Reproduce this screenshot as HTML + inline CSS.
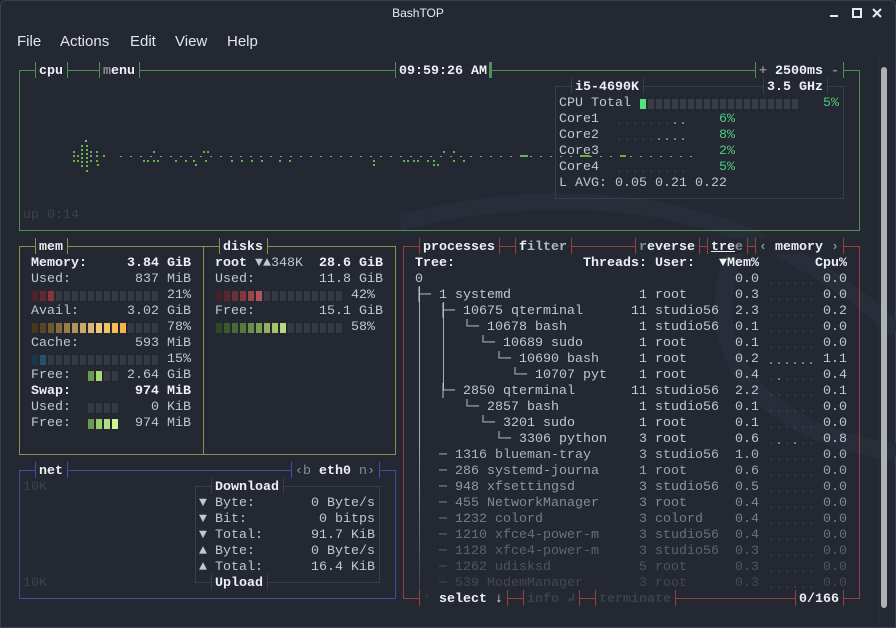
<!DOCTYPE html>
<html><head><meta charset="utf-8"><style>
*{margin:0;padding:0;box-sizing:border-box}
html,body{width:896px;height:628px;overflow:hidden;background:#232833}
body{position:relative;font-family:"Liberation Mono",monospace;font-size:13.33px;color:#c3c8cd}
.win{position:absolute;left:0;top:0;width:896px;height:628px;border:1px solid #3a404b;border-radius:6px 6px 0 0}
.t{position:absolute;white-space:pre;line-height:16px;height:16px;padding-top:2px}
.b{font-weight:bold;color:#eef0f2}
.d{color:#3c424b}
.g{color:#888d94}
.gr{color:#50c878}
.h{position:absolute;height:1px}
.v{position:absolute;width:1px}
.lbl{position:absolute;height:16px;background:#232833;border-left:1px solid;border-right:1px solid;padding-left:3px;padding-top:2px;white-space:pre;line-height:16px}
.c{position:absolute;width:6px;height:10px}
.ra{text-align:right}
.menu{position:absolute;top:33px;font-family:"Liberation Sans",sans-serif;font-size:15px;color:#e2e6ea}
</style></head><body>
<div class="win"></div>
<svg style="position:absolute;left:0;top:0" width="896" height="628">
<path d="M400 222 Q 700 150 896 330" stroke="#282e39" stroke-width="16" fill="none"/>
<path d="M745 232 C 690 330 740 430 896 452" stroke="#282e39" stroke-width="18" fill="none"/>
<defs><pattern id="p" width="10" height="3" patternUnits="userSpaceOnUse"><rect x="0" y="0" width="2" height="2" fill="#6cb04c"/></pattern></defs>
<rect x="113" y="155" width="580" height="2" fill="url(#p)"/>
<g fill="#6cb04c">
<rect x="73" y="151" width="2" height="2"/><rect x="73" y="155" width="2" height="2"/><rect x="73" y="160" width="2" height="2"/>
<rect x="77" y="155" width="2" height="2"/><rect x="77" y="160" width="2" height="2"/>
<rect x="81" y="145" width="2" height="2"/><rect x="81" y="149" width="2" height="2"/><rect x="81" y="153" width="2" height="2"/><rect x="81" y="157" width="2" height="2"/><rect x="81" y="161" width="2" height="2"/><rect x="81" y="165" width="2" height="2"/>
<rect x="85" y="140" width="2" height="2" fill="#a8b060"/><rect x="86" y="145" width="2" height="2"/><rect x="86" y="149" width="2" height="2"/><rect x="86" y="153" width="2" height="2"/><rect x="86" y="157" width="2" height="2"/><rect x="86" y="161" width="2" height="2"/><rect x="86" y="165" width="2" height="2"/><rect x="86" y="170" width="2" height="2"/>
<rect x="90" y="151" width="2" height="2"/><rect x="90" y="155" width="2" height="2"/><rect x="90" y="160" width="2" height="2"/>
<rect x="96" y="151" width="2" height="2"/><rect x="96" y="155" width="2" height="2"/><rect x="96" y="160" width="2" height="2"/><rect x="97" y="164" width="2" height="2"/>
<rect x="103" y="155" width="2" height="2"/>
<rect x="143" y="160" width="2" height="2"/><rect x="147" y="160" width="2" height="2"/>
<rect x="153" y="151" width="2" height="2"/><rect x="153" y="160" width="2" height="2"/><rect x="157" y="160" width="2" height="2"/>
<rect x="175" y="160" width="2" height="2"/><rect x="185" y="160" width="2" height="2"/><rect x="193" y="160" width="2" height="2"/><rect x="195" y="164" width="2" height="2"/>
<rect x="203" y="151" width="2" height="2"/><rect x="207" y="151" width="2" height="2"/><rect x="205" y="160" width="2" height="2"/>
<rect x="231" y="160" width="2" height="2"/><rect x="241" y="160" width="2" height="2"/><rect x="251" y="160" width="2" height="2"/><rect x="261" y="160" width="2" height="2"/>
<rect x="279" y="160" width="2" height="2"/><rect x="289" y="160" width="2" height="2"/><rect x="373" y="160" width="2" height="2"/><rect x="373" y="164" width="2" height="2"/>
<rect x="403" y="160" width="2" height="2"/><rect x="407" y="160" width="2" height="2"/><rect x="413" y="160" width="2" height="2"/><rect x="417" y="160" width="2" height="2"/><rect x="427" y="160" width="2" height="2"/>
<rect x="433" y="160" width="2" height="2"/><rect x="433" y="164" width="2" height="2"/><rect x="437" y="164" width="2" height="2"/>
<rect x="443" y="151" width="2" height="2"/><rect x="453" y="151" width="2" height="2"/><rect x="453" y="160" width="2" height="2"/><rect x="463" y="160" width="2" height="2"/>
<rect x="520" y="155" width="8" height="2"/><rect x="580" y="155" width="10" height="2"/><rect x="620" y="155" width="6" height="2"/>
</g>
</svg>

<!-- title bar -->
<div style="position:absolute;left:0;top:6px;width:836px;text-align:center;font-family:'Liberation Sans',sans-serif;font-size:12px;color:#e8ebee">BashTOP</div>
<svg style="position:absolute;left:826px;top:7px" width="62" height="14">
<rect x="4" y="8" width="8" height="2" fill="#e8ebee"/>
<rect x="27" y="2" width="8" height="8" fill="none" stroke="#e8ebee" stroke-width="2"/>
<path d="M47 2 L55 10 M55 2 L47 10" stroke="#e8ebee" stroke-width="2"/>
</svg>
<div class="menu" style="left:17px">File</div>
<div class="menu" style="left:60px">Actions</div>
<div class="menu" style="left:130px">Edit</div>
<div class="menu" style="left:175px">View</div>
<div class="menu" style="left:227px">Help</div>

<!-- scrollbar -->
<div class="v" style="left:878px;top:56px;height:570px;background:#2c323c"></div>
<div style="position:absolute;left:881px;top:67px;width:6px;height:541px;border-radius:3px;background:#aeb2b7"></div>

<!-- CPU box -->
<div class="h" style="left:19px;top:70px;width:841px;background:#4f8f55"></div>
<div class="h" style="left:19px;top:230px;width:841px;background:#4f8f55"></div>
<div class="v" style="left:19px;top:70px;height:161px;background:#4f8f55"></div>
<div class="v" style="left:859px;top:70px;height:161px;background:#4f8f55"></div>
<div class="lbl b" style="left:35px;top:62px;width:33px;border-color:#4f8f55">cpu</div>
<div class="lbl b" style="left:99px;top:62px;width:41px;border-color:#4f8f55"><span style="color:#8a8f95">m</span>enu</div>
<div class="lbl b" style="left:395px;top:62px;width:97px;border-color:#4f8f55;border-right:3px solid #4f8f55">09:59:26 AM</div>
<div class="lbl b" style="left:755px;top:62px;width:89px;border-color:#4f8f55"><span class="g">+</span> 2500ms <span class="g">-</span></div>
<div class="t d" style="left:23px;top:206px">up 0:14</div>

<!-- CPU inner -->
<div class="h" style="left:555px;top:86px;width:289px;background:#3a3f47"></div>
<div class="h" style="left:555px;top:198px;width:289px;background:#3a3f47"></div>
<div class="v" style="left:555px;top:86px;height:113px;background:#3a3f47"></div>
<div class="v" style="left:843px;top:86px;height:113px;background:#3a3f47"></div>
<div class="lbl b" style="left:571px;top:78px;width:73px;border-color:#3a3f47">i5-4690K</div>
<div class="lbl b" style="left:763px;top:78px;width:65px;border-color:#3a3f47">3.5 GHz</div>
<div class="t" style="left:559px;top:94px">CPU Total</div>
<div class="c" style="left:640px;top:99px;background:#50e080"></div>
<div style="position:absolute;left:648px;top:99px;width:152px;height:10px;background:repeating-linear-gradient(90deg,#383d45 0 6px,transparent 6px 8px)"></div>
<div class="t gr ra" style="left:799px;top:94px;width:40px">5%</div>
<div class="t" style="left:559px;top:110px">Core1</div>
<div class="t" style="left:559px;top:126px">Core2</div>
<div class="t" style="left:559px;top:142px">Core3</div>
<div class="t" style="left:559px;top:158px">Core4</div>
<div class="t d" style="left:615px;top:112px">.......<span class="gr">..</span></div>
<div class="t d" style="left:615px;top:128px">.....<span class="gr">....</span></div>
<div class="t d" style="left:615px;top:160px">.........</div>
<div class="t gr ra" style="left:695px;top:110px;width:40px">6%</div>
<div class="t gr ra" style="left:695px;top:126px;width:40px">8%</div>
<div class="t gr ra" style="left:695px;top:142px;width:40px">2%</div>
<div class="t gr ra" style="left:695px;top:158px;width:40px">5%</div>
<div class="t" style="left:559px;top:174px">L AVG: 0.05 0.21 0.22</div>

<!-- MEM box -->
<div class="h" style="left:19px;top:246px;width:377px;background:#8f8f45"></div>
<div class="h" style="left:19px;top:454px;width:377px;background:#8f8f45"></div>
<div class="v" style="left:19px;top:246px;height:209px;background:#8f8f45"></div>
<div class="v" style="left:395px;top:246px;height:209px;background:#8f8f45"></div>
<div class="v" style="left:203px;top:246px;height:209px;background:#8f8f45"></div>
<div class="lbl b" style="left:35px;top:238px;width:33px;border-color:#8f8f45">mem</div>
<div class="lbl b" style="left:219px;top:238px;width:49px;border-color:#8f8f45">disks</div>

<div class="t b" style="left:31px;top:254px;width:160px">Memory:<span style="position:absolute;right:0">3.84 GiB</span></div>
<div class="t" style="left:31px;top:270px;width:160px">Used:<span style="position:absolute;right:0">837 MiB</span></div>
<div class="t" style="left:31px;top:286px;width:160px"><span style="position:absolute;right:0">21%</span></div>
<div class="t" style="left:31px;top:302px;width:160px">Avail:<span style="position:absolute;right:0">3.02 GiB</span></div>
<div class="t" style="left:31px;top:318px;width:160px"><span style="position:absolute;right:0">78%</span></div>
<div class="t" style="left:31px;top:334px;width:160px">Cache:<span style="position:absolute;right:0">593 MiB</span></div>
<div class="t" style="left:31px;top:350px;width:160px"><span style="position:absolute;right:0">15%</span></div>
<div class="t" style="left:31px;top:366px;width:160px">Free:<span style="position:absolute;right:0">2.64 GiB</span></div>
<div class="t b" style="left:31px;top:382px;width:160px">Swap:<span style="position:absolute;right:0">974 MiB</span></div>
<div class="t" style="left:31px;top:398px;width:160px">Used:<span style="position:absolute;right:0">0 KiB</span></div>
<div class="t" style="left:31px;top:414px;width:160px">Free:<span style="position:absolute;right:0">974 MiB</span></div>

<div style="position:absolute;left:32px;top:291px;width:128px;height:10px;background:repeating-linear-gradient(90deg,#363a42 0 6px,transparent 6px 8px)"></div>
<div style="position:absolute;left:32px;top:323px;width:128px;height:10px;background:repeating-linear-gradient(90deg,#363a42 0 6px,transparent 6px 8px)"></div>
<div style="position:absolute;left:32px;top:355px;width:128px;height:10px;background:repeating-linear-gradient(90deg,#363a42 0 6px,transparent 6px 8px)"></div>
<div style="position:absolute;left:88px;top:371px;width:32px;height:10px;background:repeating-linear-gradient(90deg,#363a42 0 6px,transparent 6px 8px)"></div>
<div style="position:absolute;left:88px;top:403px;width:32px;height:10px;background:repeating-linear-gradient(90deg,#363a42 0 6px,transparent 6px 8px)"></div>
<div class="c" style="left:32px;top:291px;background:#4e2228"></div><div class="c" style="left:40px;top:291px;background:#66282f"></div><div class="c" style="left:48px;top:291px;background:#843440"></div>
<div class="c" style="left:32px;top:323px;background:#48391c"></div><div class="c" style="left:40px;top:323px;background:#584624"></div><div class="c" style="left:48px;top:323px;background:#6c582e"></div><div class="c" style="left:56px;top:323px;background:#826a3a"></div><div class="c" style="left:64px;top:323px;background:#9a7e48"></div><div class="c" style="left:72px;top:323px;background:#b29458"></div><div class="c" style="left:80px;top:323px;background:#c8a866"></div><div class="c" style="left:88px;top:323px;background:#dab870"></div><div class="c" style="left:96px;top:323px;background:#eac676"></div><div class="c" style="left:104px;top:323px;background:#f2c262"></div><div class="c" style="left:112px;top:323px;background:#f4bc52"></div><div class="c" style="left:120px;top:323px;background:#f6b444"></div>
<div class="c" style="left:32px;top:355px;background:#1a3448"></div><div class="c" style="left:40px;top:355px;background:#265270"></div>
<div class="c" style="left:88px;top:371px;background:#6a9a4a"></div><div class="c" style="left:96px;top:371px;background:#a4d878"></div>
<div class="c" style="left:88px;top:419px;background:#6a9a4a"></div><div class="c" style="left:96px;top:419px;background:#98cc6c"></div><div class="c" style="left:104px;top:419px;background:#b0e080"></div><div class="c" style="left:112px;top:419px;background:#cef494"></div>

<!-- disks -->
<div class="t" style="left:215px;top:254px;width:168px"><span class="b">root</span> ▼▲348K<span class="b" style="position:absolute;right:0">28.6 GiB</span></div>
<div class="t" style="left:215px;top:270px;width:168px">Used:<span style="position:absolute;right:0">11.8 GiB</span></div>
<div class="t" style="left:351px;top:286px">42%</div>
<div class="t" style="left:215px;top:302px;width:168px">Free:<span style="position:absolute;right:0">15.1 GiB</span></div>
<div class="t" style="left:351px;top:318px">58%</div>
<div style="position:absolute;left:216px;top:291px;width:128px;height:10px;background:repeating-linear-gradient(90deg,#363a42 0 6px,transparent 6px 8px)"></div>
<div style="position:absolute;left:216px;top:323px;width:128px;height:10px;background:repeating-linear-gradient(90deg,#363a42 0 6px,transparent 6px 8px)"></div>
<div class="c" style="left:216px;top:291px;background:#4a2024"></div><div class="c" style="left:224px;top:291px;background:#5a282c"></div><div class="c" style="left:232px;top:291px;background:#6e3036"></div><div class="c" style="left:240px;top:291px;background:#843840"></div><div class="c" style="left:248px;top:291px;background:#9a444c"></div><div class="c" style="left:256px;top:291px;background:#b0525a"></div>
<div class="c" style="left:216px;top:323px;background:#2e4a24"></div><div class="c" style="left:224px;top:323px;background:#3a5a2c"></div><div class="c" style="left:232px;top:323px;background:#486a34"></div><div class="c" style="left:240px;top:323px;background:#587a3e"></div><div class="c" style="left:248px;top:323px;background:#6a8c48"></div><div class="c" style="left:256px;top:323px;background:#7c9e52"></div><div class="c" style="left:264px;top:323px;background:#90b060"></div><div class="c" style="left:272px;top:323px;background:#a4c470"></div><div class="c" style="left:280px;top:323px;background:#b8d880"></div>

<!-- NET box -->
<div class="h" style="left:19px;top:470px;width:377px;background:#4a48a0"></div>
<div class="h" style="left:19px;top:598px;width:377px;background:#4a48a0"></div>
<div class="v" style="left:19px;top:470px;height:129px;background:#4a48a0"></div>
<div class="v" style="left:395px;top:470px;height:129px;background:#4a48a0"></div>
<div class="lbl b" style="left:35px;top:462px;width:33px;border-color:#4a48a0">net</div>
<div class="lbl" style="left:291px;top:462px;width:89px;border-color:#4a48a0"><span class="g">‹b</span> <span class="b">eth0</span> <span class="g">n›</span></div>
<div class="t d" style="left:23px;top:478px">10K</div>
<div class="t d" style="left:23px;top:574px">10K</div>
<div class="h" style="left:195px;top:486px;width:185px;background:#3a3f47"></div>
<div class="h" style="left:195px;top:582px;width:185px;background:#3a3f47"></div>
<div class="v" style="left:195px;top:486px;height:97px;background:#3a3f47"></div>
<div class="v" style="left:379px;top:486px;height:97px;background:#3a3f47"></div>
<div class="lbl b" style="left:211px;top:478px;width:73px;border-color:#3a3f47">Download</div>
<div class="lbl b" style="left:211px;top:574px;width:57px;border-color:#3a3f47">Upload</div>
<div class="t" style="left:199px;top:494px;width:176px">▼ Byte:<span style="position:absolute;right:0">0 Byte/s</span></div>
<div class="t" style="left:199px;top:510px;width:176px">▼ Bit:<span style="position:absolute;right:0">0 bitps</span></div>
<div class="t" style="left:199px;top:526px;width:176px">▼ Total:<span style="position:absolute;right:0">91.7 KiB</span></div>
<div class="t" style="left:199px;top:542px;width:176px">▲ Byte:<span style="position:absolute;right:0">0 Byte/s</span></div>
<div class="t" style="left:199px;top:558px;width:176px">▲ Total:<span style="position:absolute;right:0">16.4 KiB</span></div>

<!-- PROC box -->
<div class="h" style="left:403px;top:246px;width:457px;background:#9a4040"></div>
<div class="h" style="left:403px;top:598px;width:457px;background:#9a4040"></div>
<div class="v" style="left:403px;top:246px;height:353px;background:#9a4040"></div>
<div class="v" style="left:859px;top:246px;height:353px;background:#9a4040"></div>
<div class="lbl b" style="left:419px;top:238px;width:81px;border-color:#9a4040">processes</div>
<div class="lbl b" style="left:515px;top:238px;width:57px;border-color:#9a4040">f<span style="color:#b4b8bd">ilter</span></div>
<div class="lbl b" style="left:635px;top:238px;width:65px;border-color:#9a4040"><span class="g">r</span>everse</div>
<div class="lbl b" style="left:707px;top:238px;width:41px;border-color:#9a4040"><span style="text-decoration:underline">tre</span><span class="g">e</span></div>
<div class="lbl b" style="left:755px;top:238px;width:89px;border-color:#9a4040"><span class="g">‹</span> memory <span class="g">›</span></div>
<div class="lbl" style="left:419px;top:590px;width:89px;border-color:#9a4040"><span class="d">↑</span> <span class="b">select ↓</span></div>
<div class="lbl" style="left:523px;top:590px;width:57px;border-color:#9a4040"><span class="b" style="color:#3c424b">info ↲</span></div>
<div class="lbl" style="left:595px;top:590px;width:81px;border-color:#9a4040"><span class="b" style="color:#3c424b">terminate</span></div>
<div class="lbl b" style="left:795px;top:590px;width:49px;border-color:#9a4040">0/166</div>

<div class="t b" style="left:415px;top:254px">Tree:</div>
<div class="t b" style="left:583px;top:254px">Threads: User:</div>
<div class="t b" style="left:719px;top:254px">▼Mem%</div>
<div class="t b" style="left:815px;top:254px">Cpu%</div>

<!-- tree vertical lines -->
<div class="v" style="left:419px;top:286px;height:160px;background:#a8aeb4"></div>
<div class="v" style="left:419px;top:446px;height:144px;background:linear-gradient(#a0a6ac,#3e444a)"></div>
<div class="v" style="left:443px;top:302px;height:88px;background:#a8aeb4"></div>

<div style="position:absolute;left:0;top:0;color:#c3c8cd">
<div class="t" style="left:415px;top:270px">0</div><div class="t ra" style="left:719px;top:270px;width:40px">0.0</div><div class="t ra" style="left:807px;top:270px;width:40px">0.0</div>
<div class="t" style="left:415px;top:286px">├─ 1 systemd</div><div class="t ra" style="left:583px;top:286px;width:64px">1</div><div class="t" style="left:655px;top:286px">root</div><div class="t ra" style="left:719px;top:286px;width:40px">0.3</div><div class="t ra" style="left:807px;top:286px;width:40px">0.0</div>
<div class="t" style="left:415px;top:302px">   ├─ 10675 qterminal</div><div class="t ra" style="left:583px;top:302px;width:64px">11</div><div class="t" style="left:655px;top:302px">studio56</div><div class="t ra" style="left:719px;top:302px;width:40px">2.3</div><div class="t ra" style="left:807px;top:302px;width:40px">0.2</div>
<div class="t" style="left:415px;top:318px">      └─ 10678 bash</div><div class="t ra" style="left:583px;top:318px;width:64px">1</div><div class="t" style="left:655px;top:318px">studio56</div><div class="t ra" style="left:719px;top:318px;width:40px">0.1</div><div class="t ra" style="left:807px;top:318px;width:40px">0.0</div>
<div class="t" style="left:415px;top:334px">        └─ 10689 sudo</div><div class="t ra" style="left:583px;top:334px;width:64px">1</div><div class="t" style="left:655px;top:334px">root</div><div class="t ra" style="left:719px;top:334px;width:40px">0.1</div><div class="t ra" style="left:807px;top:334px;width:40px">0.0</div>
<div class="t" style="left:415px;top:350px">          └─ 10690 bash</div><div class="t ra" style="left:583px;top:350px;width:64px">1</div><div class="t" style="left:655px;top:350px">root</div><div class="t ra" style="left:719px;top:350px;width:40px">0.2</div><div class="t ra" style="left:807px;top:350px;width:40px">1.1</div>
<div class="t" style="left:415px;top:366px">            └─ 10707 pyt</div><div class="t ra" style="left:583px;top:366px;width:64px">1</div><div class="t" style="left:655px;top:366px">root</div><div class="t ra" style="left:719px;top:366px;width:40px">0.4</div><div class="t ra" style="left:807px;top:366px;width:40px">0.4</div>
<div class="t" style="left:415px;top:382px">   ├─ 2850 qterminal</div><div class="t ra" style="left:583px;top:382px;width:64px">11</div><div class="t" style="left:655px;top:382px">studio56</div><div class="t ra" style="left:719px;top:382px;width:40px">2.2</div><div class="t ra" style="left:807px;top:382px;width:40px">0.1</div>
<div class="t" style="left:415px;top:398px">      └─ 2857 bash</div><div class="t ra" style="left:583px;top:398px;width:64px">1</div><div class="t" style="left:655px;top:398px">studio56</div><div class="t ra" style="left:719px;top:398px;width:40px">0.1</div><div class="t ra" style="left:807px;top:398px;width:40px">0.0</div>
<div class="t" style="left:415px;top:414px">        └─ 3201 sudo</div><div class="t ra" style="left:583px;top:414px;width:64px">1</div><div class="t" style="left:655px;top:414px">root</div><div class="t ra" style="left:719px;top:414px;width:40px">0.1</div><div class="t ra" style="left:807px;top:414px;width:40px">0.0</div>
<div class="t" style="left:415px;top:430px">          └─ 3306 python</div><div class="t ra" style="left:583px;top:430px;width:64px">3</div><div class="t" style="left:655px;top:430px">root</div><div class="t ra" style="left:719px;top:430px;width:40px">0.6</div><div class="t ra" style="left:807px;top:430px;width:40px">0.8</div>
</div>
<div style="position:absolute;left:0;top:0;color:#b0b5ba">
<div class="t" style="left:415px;top:446px">   ─ 1316 blueman-tray</div><div class="t ra" style="left:583px;top:446px;width:64px">3</div><div class="t" style="left:655px;top:446px">studio56</div><div class="t ra" style="left:719px;top:446px;width:40px">1.0</div><div class="t ra" style="left:807px;top:446px;width:40px">0.0</div></div>
<div style="position:absolute;left:0;top:0;color:#a0a5ab">
<div class="t" style="left:415px;top:462px">   ─ 286 systemd-journa</div><div class="t ra" style="left:583px;top:462px;width:64px">1</div><div class="t" style="left:655px;top:462px">root</div><div class="t ra" style="left:719px;top:462px;width:40px">0.6</div><div class="t ra" style="left:807px;top:462px;width:40px">0.0</div></div>
<div style="position:absolute;left:0;top:0;color:#93989e">
<div class="t" style="left:415px;top:478px">   ─ 948 xfsettingsd</div><div class="t ra" style="left:583px;top:478px;width:64px">3</div><div class="t" style="left:655px;top:478px">studio56</div><div class="t ra" style="left:719px;top:478px;width:40px">0.5</div><div class="t ra" style="left:807px;top:478px;width:40px">0.0</div></div>
<div style="position:absolute;left:0;top:0;color:#858a90">
<div class="t" style="left:415px;top:494px">   ─ 455 NetworkManager</div><div class="t ra" style="left:583px;top:494px;width:64px">3</div><div class="t" style="left:655px;top:494px">root</div><div class="t ra" style="left:719px;top:494px;width:40px">0.4</div><div class="t ra" style="left:807px;top:494px;width:40px">0.0</div></div>
<div style="position:absolute;left:0;top:0;color:#787d83">
<div class="t" style="left:415px;top:510px">   ─ 1232 colord</div><div class="t ra" style="left:583px;top:510px;width:64px">3</div><div class="t" style="left:655px;top:510px">colord</div><div class="t ra" style="left:719px;top:510px;width:40px">0.4</div><div class="t ra" style="left:807px;top:510px;width:40px">0.0</div></div>
<div style="position:absolute;left:0;top:0;color:#6b7076">
<div class="t" style="left:415px;top:526px">   ─ 1210 xfce4-power-m</div><div class="t ra" style="left:583px;top:526px;width:64px">3</div><div class="t" style="left:655px;top:526px">studio56</div><div class="t ra" style="left:719px;top:526px;width:40px">0.4</div><div class="t ra" style="left:807px;top:526px;width:40px">0.0</div></div>
<div style="position:absolute;left:0;top:0;color:#5e6369">
<div class="t" style="left:415px;top:542px">   ─ 1128 xfce4-power-m</div><div class="t ra" style="left:583px;top:542px;width:64px">3</div><div class="t" style="left:655px;top:542px">studio56</div><div class="t ra" style="left:719px;top:542px;width:40px">0.3</div><div class="t ra" style="left:807px;top:542px;width:40px">0.0</div></div>
<div style="position:absolute;left:0;top:0;color:#51565c">
<div class="t" style="left:415px;top:558px">   ─ 1262 udisksd</div><div class="t ra" style="left:583px;top:558px;width:64px">5</div><div class="t" style="left:655px;top:558px">root</div><div class="t ra" style="left:719px;top:558px;width:40px">0.3</div><div class="t ra" style="left:807px;top:558px;width:40px">0.0</div></div>
<div style="position:absolute;left:0;top:0;color:#44494f">
<div class="t" style="left:415px;top:574px">   ─ 539 ModemManager</div><div class="t ra" style="left:583px;top:574px;width:64px">3</div><div class="t" style="left:655px;top:574px">root</div><div class="t ra" style="left:719px;top:574px;width:40px">0.3</div><div class="t ra" style="left:807px;top:574px;width:40px">0.0</div></div>

<!-- mini cpu graphs in process list -->
<div class="t d" style="left:767px;top:272px">......
......
......
......
......
<span class="gr">......</span>
.<span class="gr">.</span>....
......
......
......
.<span class="gr">.</span>.<span class="gr">.</span>..
......
......
......
......
......
......
......
......
......</div>
</body></html>
